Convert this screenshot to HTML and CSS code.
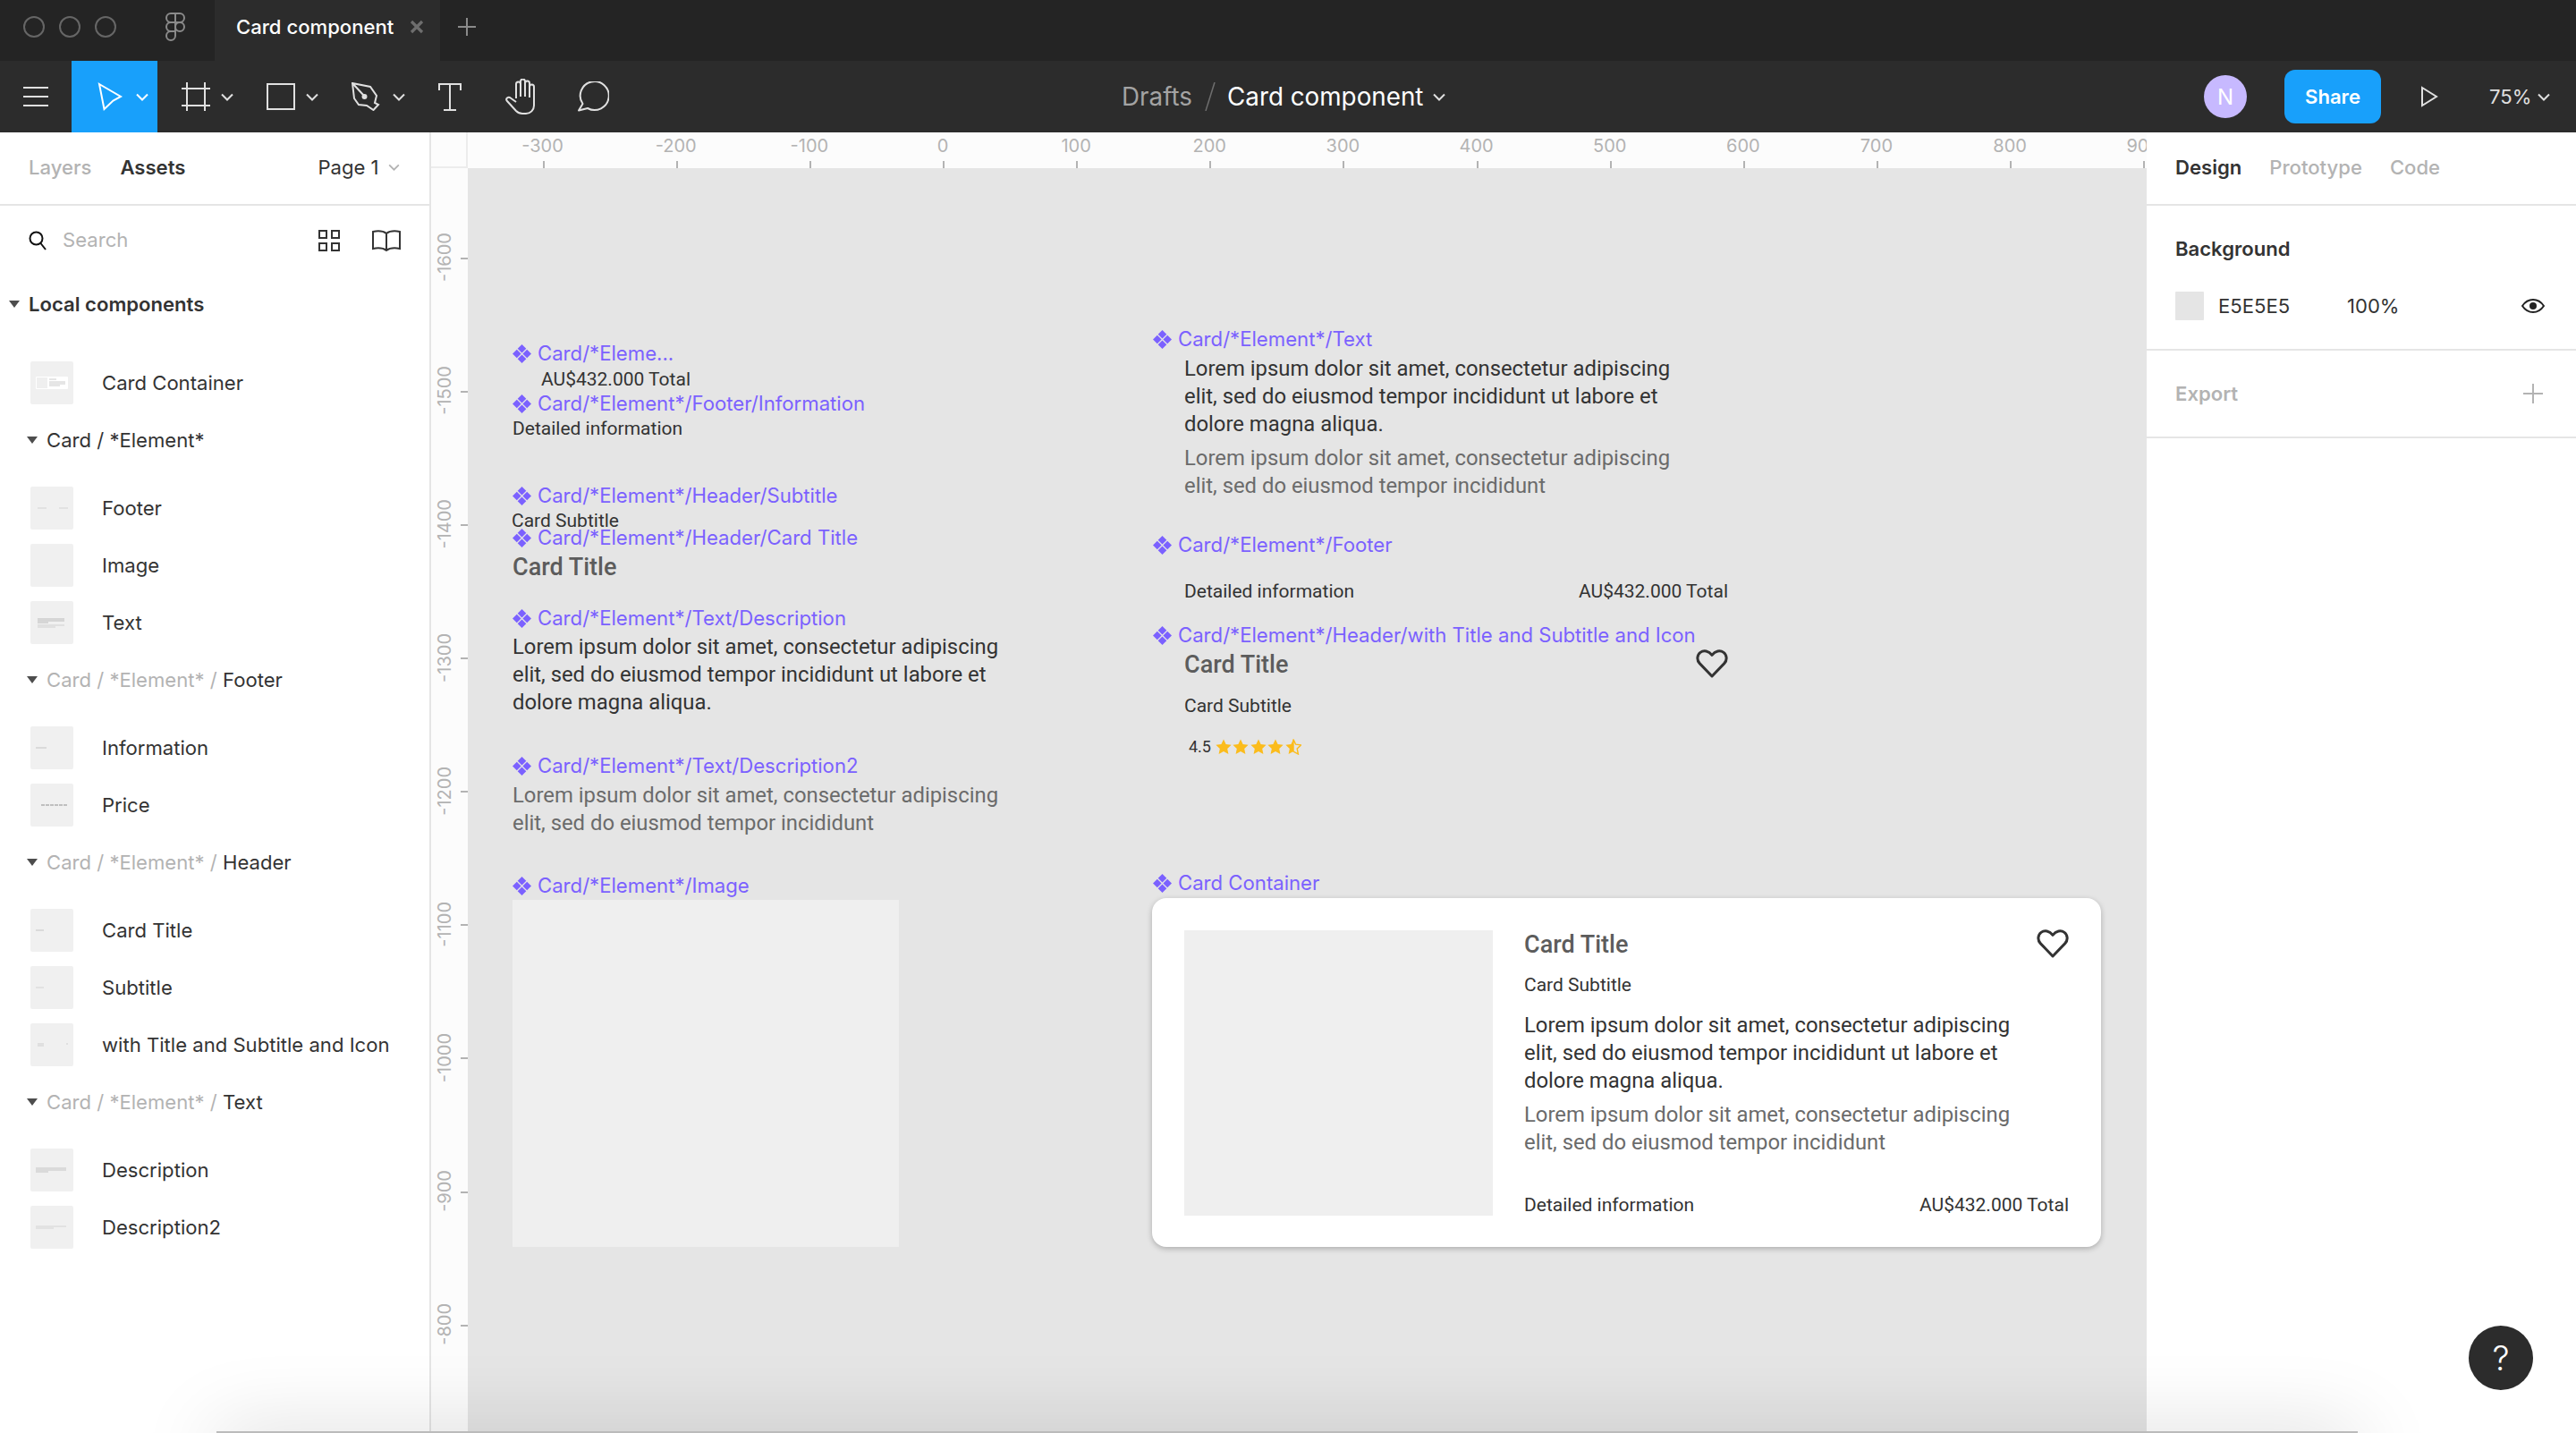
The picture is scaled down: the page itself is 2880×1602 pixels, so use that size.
FILE: index.html
```html
<!DOCTYPE html>
<html lang="en">
  <head>
    <meta charset="UTF-8" />
    <title>Card component</title>
    <link rel="stylesheet" href="styles.css">
  </head>

  <body>
    <!-- svg symbols used more than once -->
    <svg class="defs" width="0" height="0">
      <symbol id="chev" viewBox="0 0 14 9"><path d="M1 1.500l6 6 6-6" fill="none" stroke="currentColor" stroke-width="2"/></symbol>
      <symbol id="comp" viewBox="0 0 21 21">
        <path d="M10.500 0l4.800 4.800-4.800 4.800-4.800-4.800zM4.800 5.700l4.800 4.800-4.800 4.800L0 10.500zM16.200 5.700l4.800 4.800-4.800 4.800-4.800-4.800zM10.500 11.400l4.800 4.800-4.800 4.800-4.800-4.800z" fill="#7b61ff"/>
      </symbol>
      <symbol id="heart" viewBox="0 0 36 32"><path d="M18 30L4.200 15.600C.6 11.800 1.400 6 5 3.400c3.800-2.800 9.400-1.800 13 3 3.600-4.800 9.200-5.800 13-3 3.600 2.600 4.400 8.400.8 12.200z" fill="none" stroke="#333" stroke-width="3" stroke-linejoin="round"/></symbol>
      <symbol id="star" viewBox="0 0 18 18"><path d="M9 .5l2.600 5.600 6 .7-4.400 4.200 1.200 6L9 14l-5.400 3 1.200-6L.4 6.800l6-.7z" fill="#fbbc1c"/></symbol>
      <symbol id="tri" viewBox="0 0 12 8"><path d="M0 0h12L6 8z" fill="#4d4d4d"/></symbol>
    </svg>

    <header class="tabbar">
      <div class="dots"><i></i><i></i><i></i></div>
      <svg class="logo" viewBox="0 0 22 32" width="22" height="32" fill="none" stroke="#8a8a8a" stroke-width="2">
        <path d="M11 1H6a5 5 0 000 10h5zM11 1h5a5 5 0 010 10h-5zM11 11H6a5 5 0 000 10h5zM11 21H6a5 5 0 105 5z"/>
        <circle cx="16" cy="16" r="5"/>
      </svg>
      <div class="tab">
        <span>Card component</span>
        <svg viewBox="0 0 16 16" width="16" height="16"><path d="M2 2l12 12M14 2L2 14" stroke="#6e6e6e" stroke-width="3.200"/></svg>
      </div>
      <svg class="newtab" viewBox="0 0 20 20" width="20" height="20"><path d="M10 0v20M0 10h20" stroke="#8a8a8a" stroke-width="2"/></svg>
    </header>

    <nav class="toolbar">
      <div class="tools">
        <button class="tool tool-menu">
          <svg viewBox="0 0 28 22" width="28" height="22"><path d="M0 1h28M0 11h28M0 21h28" stroke="#e0e0e0" stroke-width="2"/></svg>
        </button>
        <button class="tool tool-move">
          <svg viewBox="0 0 28 32" width="28" height="32"><path d="M2 2l24 14-8.500 4.500L7.500 30z" fill="none" stroke="#fff" stroke-width="2" stroke-linejoin="miter"/></svg>
          <svg class="chev" width="14" height="9"><use href="#chev"/></svg>
        </button>
        <button class="tool tool-drop">
          <svg viewBox="0 0 32 32" width="32" height="32"><path d="M6 0v32M26 0v32M0 7h32M0 26h32" stroke="#e0e0e0" stroke-width="2"/></svg>
          <svg class="chev" width="14" height="9"><use href="#chev"/></svg>
        </button>
        <button class="tool tool-drop">
          <svg viewBox="0 0 32 32" width="32" height="32"><rect x="1" y="2" width="30" height="28" fill="none" stroke="#e0e0e0" stroke-width="2"/></svg>
          <svg class="chev" width="14" height="9"><use href="#chev"/></svg>
        </button>
        <button class="tool tool-drop tool-pen">
          <svg viewBox="0 0 32 32" width="32" height="32" fill="none" stroke="#e0e0e0" stroke-width="2"><path d="M1 1l20 4 7 10-2 8 4 2-5.500 6-7.500-5-9-1-5-7zM1 1l13 14"/><circle cx="14.500" cy="16" r="2" fill="#e0e0e0"/></svg>
          <svg class="chev" width="14" height="9"><use href="#chev"/></svg>
        </button>
        <button class="tool tool-type">
          <svg viewBox="0 0 26 32" width="26" height="32" fill="none" stroke="#e0e0e0" stroke-width="2"><path d="M1 9V2h24v7M13 2v29M6 31h14"/></svg>
        </button>
        <button class="tool tool-hand">
          <svg viewBox="0 0 36 40" width="36" height="40" fill="none" stroke="#e0e0e0" stroke-width="2" stroke-linejoin="round"><path d="M12 22V6a2.500 2.500 0 015 0M17 20V3a2.500 2.500 0 015 0v17M22 20V5a2.500 2.500 0 015 0v15M27 21V9a2.500 2.500 0 015 0v21c0 5-4 9-9 9h-4c-3 0-5-1-7-3L2 25c-2-2 0-5 3-4l7 5"/></svg>
        </button>
        <button class="tool tool-comment">
          <svg viewBox="0 0 36 34" width="36" height="34" fill="none" stroke="#e0e0e0" stroke-width="2"><path d="M2 32.500l4.500-7.500A16 16 0 1 1 12 30z" stroke-linejoin="round"/></svg>
        </button>
      </div>
      <div class="crumbs">
        <span class="crumb-dim">Drafts</span>
        <svg viewBox="0 0 14 32" width="14" height="32"><path d="M12 0L2 32" stroke="#6e6e6e" stroke-width="1.500"/></svg>
        <span class="crumb-name">Card component</span>
        <svg class="chev" width="14" height="9"><use href="#chev"/></svg>
      </div>
      <div class="actions">
        <div class="avatar">N</div>
        <button class="share">Share</button>
        <svg class="play" viewBox="0 0 20 24" width="20" height="24"><path d="M2 2l16 10L2 22z" fill="none" stroke="#e0e0e0" stroke-width="2"/></svg>
        <span class="zoom">75%</span>
        <svg class="chev" width="14" height="9"><use href="#chev"/></svg>
      </div>
    </nav>

    <main class="workspace">
      <aside class="sidebar">
        <div class="panel-tabs">
          <span class="tab-off">Layers</span>
          <span class="tab-on">Assets</span>
          <span class="page">Page 1</span>
          <svg class="chev" width="13" height="8"><use href="#chev"/></svg>
        </div>
        <div class="search">
          <svg class="search-ic" viewBox="0 0 20 22" width="20" height="22" fill="none" stroke="#111" stroke-width="2"><circle cx="8.500" cy="8.500" r="7"/><path d="M13.500 14l5.500 7"/></svg>
          <span class="search-txt">Search</span>
          <svg class="grid-ic" viewBox="0 0 24 24" width="24" height="24" fill="none" stroke="#333" stroke-width="2"><rect x="1" y="1" width="8" height="8"/><rect x="15" y="1" width="8" height="8"/><rect x="1" y="15" width="8" height="8"/><rect x="15" y="15" width="8" height="8"/></svg>
          <svg class="book-ic" viewBox="0 0 34 24" width="34" height="24" fill="none" stroke="#333" stroke-width="2"><path d="M17 4C13 1 7 1 2 2v19c5-1 11-1 15 2 4-3 10-3 15-2V2c-5-1-11-1-15 2zM17 4v19"/></svg>
        </div>

        <div class="local-head">
          <svg class="tri" width="12" height="8"><use href="#tri"/></svg>
          <span>Local components</span>
        </div>
        <ul class="assets assets-first">
          <li>
            <svg class="thumb" viewBox="0 0 48 48"><rect x="6" y="17" width="36" height="14" rx="1" fill="#fff"/><rect x="7" y="18" width="12" height="12" fill="#efefef"/><path d="M21 20h8M21 23h18M21 25h18M21 27h12" stroke="#ccc"/></svg>
            <span>Card Container</span>
          </li>
        </ul>

        <div class="group">
          <svg class="tri" width="12" height="8"><use href="#tri"/></svg>
          <span>Card / *Element*</span>
        </div>
        <ul class="assets">
          <li>
            <svg class="thumb" viewBox="0 0 48 48"><path d="M8 24h10M32 24h10" stroke="#d4d4d4"/></svg>
            <span>Footer</span>
          </li>
          <li><svg class="thumb" viewBox="0 0 48 48"></svg><span>Image</span></li>
          <li>
            <svg class="thumb" viewBox="0 0 48 48"><path d="M8 20h30M8 22h30M8 24h12" stroke="#bbb"/><path d="M8 27h30M8 29h20" stroke="#d0d0d0"/></svg>
            <span>Text</span>
          </li>
        </ul>

        <div class="group">
          <svg class="tri" width="12" height="8"><use href="#tri"/></svg>
          <span><em>Card / *Element* /</em> Footer</span>
        </div>
        <ul class="assets">
          <li>
            <svg class="thumb" viewBox="0 0 48 48"><path d="M6 24h12" stroke="#c4c4c4"/></svg>
            <span>Information</span>
          </li>
          <li>
            <svg class="thumb" viewBox="0 0 48 48"><path d="M12 24h30" stroke="#8f8f8f" stroke-dasharray="4 1"/></svg>
            <span>Price</span>
          </li>
        </ul>

        <div class="group">
          <svg class="tri" width="12" height="8"><use href="#tri"/></svg>
          <span><em>Card / *Element* /</em> Header</span>
        </div>
        <ul class="assets">
          <li>
            <svg class="thumb" viewBox="0 0 48 48"><path d="M6 24h9" stroke="#c4c4c4"/></svg>
            <span>Card Title</span>
          </li>
          <li>
            <svg class="thumb" viewBox="0 0 48 48"><path d="M6 24h9" stroke="#d4d4d4"/></svg>
            <span>Subtitle</span>
          </li>
          <li>
            <svg class="thumb" viewBox="0 0 48 48"><path d="M8 23h7M8 25h7M40 23h2" stroke="#cfcfcf"/></svg>
            <span>with Title and Subtitle and Icon</span>
          </li>
        </ul>

        <div class="group">
          <svg class="tri" width="12" height="8"><use href="#tri"/></svg>
          <span><em>Card / *Element* /</em> Text</span>
        </div>
        <ul class="assets">
          <li>
            <svg class="thumb" viewBox="0 0 48 48"><path d="M6 22h34M6 24h34M6 26h14" stroke="#c4c4c4"/></svg>
            <span>Description</span>
          </li>
          <li>
            <svg class="thumb" viewBox="0 0 48 48"><path d="M6 23h34M6 25h20" stroke="#d4d4d4"/></svg>
            <span>Description2</span>
          </li>
        </ul>
      </aside>

      <section class="stage">
        <div class="hrule">
          <div class="corner"></div>
          <div class="hticks">
            <span>-300</span><span>-200</span><span>-100</span><span>0</span><span>100</span><span>200</span><span>300</span><span>400</span><span>500</span><span>600</span><span>700</span><span>800</span><span>900</span>
          </div>
        </div>
        <div class="stage-body">
          <div class="vrule">
            <span><b>-1600</b></span><span><b>-1500</b></span><span><b>-1400</b></span><span><b>-1300</b></span><span><b>-1200</b></span><span><b>-1100</b></span><span><b>-1000</b></span><span><b>-900</b></span><span><b>-800</b></span>
          </div>

          <div class="canvas">
            <!-- left column -->
            <div class="label l-price"><svg width="21" height="21"><use href="#comp"/></svg>Card/*Eleme...</div>
            <div class="small n-price">AU$432.000 Total</div>
            <div class="label l-info"><svg width="21" height="21"><use href="#comp"/></svg>Card/*Element*/Footer/Information</div>
            <div class="small n-info">Detailed information</div>
            <div class="label l-sub"><svg width="21" height="21"><use href="#comp"/></svg>Card/*Element*/Header/Subtitle</div>
            <div class="small n-sub">Card Subtitle</div>
            <div class="label l-title"><svg width="21" height="21"><use href="#comp"/></svg>Card/*Element*/Header/Card Title</div>
            <div class="title n-title">Card Title</div>
            <div class="label l-desc"><svg width="21" height="21"><use href="#comp"/></svg>Card/*Element*/Text/Description</div>
            <p class="lorem n-desc">Lorem ipsum dolor sit amet, consectetur adipiscing<br />elit, sed do eiusmod tempor incididunt ut labore et<br />dolore magna aliqua.</p>
            <div class="label l-desc2"><svg width="21" height="21"><use href="#comp"/></svg>Card/*Element*/Text/Description2</div>
            <p class="lorem2 n-desc2">Lorem ipsum dolor sit amet, consectetur adipiscing<br />elit, sed do eiusmod tempor incididunt</p>
            <div class="label l-image"><svg width="21" height="21"><use href="#comp"/></svg>Card/*Element*/Image</div>
            <div class="image n-image"></div>

            <!-- right column -->
            <div class="label l-text"><svg width="21" height="21"><use href="#comp"/></svg>Card/*Element*/Text</div>
            <div class="n-text">
              <p class="lorem">Lorem ipsum dolor sit amet, consectetur adipiscing<br />elit, sed do eiusmod tempor incididunt ut labore et<br />dolore magna aliqua.</p>
              <p class="lorem2">Lorem ipsum dolor sit amet, consectetur adipiscing<br />elit, sed do eiusmod tempor incididunt</p>
            </div>
            <div class="label l-footer"><svg width="21" height="21"><use href="#comp"/></svg>Card/*Element*/Footer</div>
            <div class="foot n-footer"><span>Detailed information</span><span>AU$432.000 Total</span></div>
            <div class="label l-header"><svg width="21" height="21"><use href="#comp"/></svg>Card/*Element*/Header/with Title and Subtitle and Icon</div>
            <div class="head n-header">
              <div>
                <div class="title">Card Title</div>
                <div class="small sub">Card Subtitle</div>
                <div class="rating">
                  <span>4.5</span>
                  <svg width="18" height="18"><use href="#star"/></svg>
                  <svg width="18" height="18"><use href="#star"/></svg>
                  <svg width="18" height="18"><use href="#star"/></svg>
                  <svg width="18" height="18"><use href="#star"/></svg>
                  <svg width="18" height="18" viewBox="0 0 18 18"><path d="M9 .5v13.500L3.600 17l1.200-6L.4 6.800l6-.7z" fill="#fbbc1c"/><path d="M9 .5l2.600 5.600 6 .7-4.400 4.200 1.200 6L9 14z" fill="none" stroke="#fbbc1c" stroke-width="1.400"/></svg>
                </div>
              </div>
              <svg class="heart" width="36" height="32"><use href="#heart"/></svg>
            </div>

            <div class="label l-card"><svg width="21" height="21"><use href="#comp"/></svg>Card Container</div>
            <article class="card">
              <div class="image card-img"></div>
              <div class="card-body">
                <div>
                  <div class="head">
                    <div>
                      <div class="title">Card Title</div>
                      <div class="small sub card-sub">Card Subtitle</div>
                    </div>
                    <svg class="heart" width="36" height="32"><use href="#heart"/></svg>
                  </div>
                  <p class="lorem card-lorem">Lorem ipsum dolor sit amet, consectetur adipiscing<br />elit, sed do eiusmod tempor incididunt ut labore et<br />dolore magna aliqua.</p>
                  <p class="lorem2">Lorem ipsum dolor sit amet, consectetur adipiscing<br />elit, sed do eiusmod tempor incididunt</p>
                </div>
                <div class="foot"><span>Detailed information</span><span>AU$432.000 Total</span></div>
              </div>
            </article>
          </div>
        </div>
      </section>

      <aside class="props">
        <div class="panel-tabs props-tabs">
          <span class="tab-on">Design</span>
          <span class="tab-off">Prototype</span>
          <span class="tab-off">Code</span>
        </div>
        <div class="bg-section">
          <h4>Background</h4>
          <div class="fill">
            <i class="swatch"></i>
            <span class="hex">E5E5E5</span>
            <span class="pct">100%</span>
            <svg class="eye" viewBox="0 0 26 16" width="26" height="16"><path d="M1 8c3-4.500 7-7 12-7s9 2.500 12 7c-3 4.500-7 7-12 7S4 12.500 1 8z" fill="none" stroke="#222" stroke-width="2"/><circle cx="13" cy="8" r="4" fill="#222"/></svg>
          </div>
        </div>
        <div class="export">
          <span>Export</span>
          <svg viewBox="0 0 22 22" width="22" height="22"><path d="M11 0v22M0 11h22" stroke="#b3b3b3" stroke-width="2"/></svg>
        </div>
      </aside>
    </main>

    <button class="help">?</button>
    <div class="edge"></div>
  </body>
</html>
```

FILE: styles.css
```css
* {
  box-sizing: border-box;
}
html,
body {
  margin: 0;
  width: 2880px;
  height: 1602px;
  overflow: hidden;
}
body {
  position: relative;
  font-family: Inter, "Liberation Sans", sans-serif;
  font-size: 22.1px;
  color: #333;
  background: #fff;
}
button {
  border: 0;
  padding: 0;
  background: none;
  font: inherit;
  color: inherit;
}
.defs {
  position: absolute;
}

/* top tabs */
.tabbar {
  height: 68px;
  padding-bottom: 8px;
  background: #242424;
  display: flex;
  align-items: center;
}
.dots {
  display: flex;
  gap: 16px;
  padding-left: 26px;
  width: 185px;
}
.dots i {
  width: 24px;
  height: 24px;
  border: 2px solid #666;
  border-radius: 50%;
}
.logo {
  margin-right: 33px;
}
.tab {
  width: 252px;
  height: 68px;
  margin-bottom: -8px;
  padding-bottom: 8px;
  background: #2c2c2c;
  display: flex;
  align-items: center;
  padding-left: 24px;
  gap: 18px;
  color: #fff;
  font-weight: 500;
}
.newtab {
  margin-left: 20px;
}

/* toolbar */
.toolbar {
  height: 80px;
  background: #2c2c2c;
  display: flex;
  align-items: center;
  color: #e0e0e0;
}
.tools {
  display: flex;
  height: 80px;
  width: 1254px;
}
.tool {
  height: 80px;
  display: flex;
  align-items: center;
}
.tool-menu {
  width: 80px;
  padding-left: 26px;
}
.tool-move {
  width: 96px;
  background: #18a0fb;
  padding-left: 29px;
  gap: 15px;
  color: #fff;
}
.tool-drop {
  width: 95px;
  padding-left: 27px;
  gap: 12px;
}
.tool-pen {
  padding-left: 27px;
  gap: 14px;
}
.tool-type {
  width: 75px;
  padding-left: 29px;
}
.tool-hand {
  width: 80px;
  padding-left: 29px;
}
.tool-comment {
  padding-left: 29px;
}
.crumbs {
  display: flex;
  align-items: center;
  font-size: 27.8px;
  width: 880px;
}
.crumb-dim {
  color: #a3a3a3;
  margin-right: 13px;
}
.crumb-name {
  color: #fff;
  margin-left: 12px;
  margin-right: 11px;
}
.actions {
  display: flex;
  align-items: center;
  padding-left: 330px;
}
.avatar {
  width: 48px;
  height: 48px;
  border-radius: 50%;
  background: #c7b9ff;
  color: #fff;
  display: flex;
  align-items: center;
  justify-content: center;
  font-size: 24px;
}
.share {
  width: 108px;
  height: 60px;
  margin-left: 42px;
  border-radius: 12px;
  background: #18a0fb;
  color: #fff;
  font-weight: 600;
}
.play {
  margin-left: 44px;
}
.zoom {
  margin-left: 57px;
  margin-right: 7px;
}

/* main area */
.workspace {
  height: 1454px;
  display: flex;
}
.sidebar {
  width: 482px;
  border-right: 2px solid #e5e5e5;
  flex: none;
}
.props {
  width: 480px;
  flex: none;
}
.panel-tabs {
  height: 82px;
  border-bottom: 2px solid #e5e5e5;
  display: flex;
  align-items: center;
  padding: 0 0 2px 32px;
  color: #b3b3b3;
}
.tab-off {
  color: #b3b3b3;
  font-weight: 500;
}
.tab-on {
  color: #333;
  font-weight: 600;
  margin-left: 32px;
}
.page {
  color: #333;
  margin-left: 148px;
  margin-right: 10px;
}
.search {
  height: 78px;
  display: flex;
  align-items: center;
  padding-left: 32px;
}
.search-txt {
  color: #b3b3b3;
  margin-left: 18px;
  width: 286px;
  margin-top: -2px;
}
.book-ic {
  margin-left: 35px;
}
.local-head {
  height: 64px;
  display: flex;
  align-items: center;
  padding-left: 10px;
  gap: 10px;
  font-weight: 600;
}
.local-head span,
.group span,
.assets li span {
  margin-top: -1px;
}
.group {
  height: 64px;
  display: flex;
  align-items: center;
  padding-left: 30px;
  gap: 10px;
}
.group em {
  font-style: normal;
  color: #b3b3b3;
}
.assets {
  list-style: none;
  margin: 0;
  padding: 12px 0 0 34px;
}
.assets-first {
  padding-top: 24px;
}
.assets li {
  height: 64px;
  display: flex;
  align-items: center;
  gap: 32px;
}
.thumb {
  width: 48px;
  height: 48px;
  background: #f0f0f0;
  border-radius: 2px;
}

/* rulers */
.stage {
  width: 1918px;
  display: flex;
  flex-direction: column;
  overflow: hidden;
}
.hrule {
  height: 40px;
  display: flex;
  background: #fcfcfc;
  flex: none;
}
.corner {
  width: 41px;
  border-right: 2px solid #ececec;
  border-bottom: 2px solid #ececec;
  flex: none;
}
.hticks {
  display: flex;
  padding-left: 9px;
}
.hticks span {
  width: 149.15px;
  flex: none;
  position: relative;
  text-align: center;
  font-size: 20px;
  line-height: 30px;
  color: #b3b3b3;
}
.hticks span::after {
  content: "";
  position: absolute;
  left: 50%;
  bottom: 0;
  width: 2px;
  height: 8px;
  background: #b3b3b3;
}
.stage-body {
  flex: 1;
  display: flex;
}
.vrule {
  width: 41px;
  flex: none;
  background: #fcfcfc;
  padding-top: 25px;
  overflow: hidden;
}
.vrule span {
  display: flex;
  height: 149.15px;
  align-items: center;
  position: relative;
  padding-left: 4px;
}
.vrule b {
  writing-mode: vertical-rl;
  transform: rotate(180deg);
  font-size: 20px;
  font-weight: 400;
  line-height: 22px;
  color: #b3b3b3;
}
.vrule span::after {
  content: "";
  position: absolute;
  right: 0;
  top: 50%;
  width: 8px;
  height: 2px;
  background: #b3b3b3;
}

/* canvas */
.canvas {
  flex: 1;
  position: relative;
  background: #e5e5e5;
  overflow: hidden;
  font-family: Roboto, sans-serif;
}
.label {
  position: absolute;
  display: flex;
  align-items: center;
  gap: 7px;
  height: 24px;
  font-family: Inter, sans-serif;
  font-size: 22.15px;
  color: #7b61ff;
  white-space: nowrap;
}
.small {
  font-size: 21px;
  line-height: 24px;
  color: #333;
}
.title {
  font-size: 27px;
  line-height: 34px;
  font-weight: 500;
  color: #5c5c5c;
}
.lorem,
.lorem2 {
  margin: 0;
  font-size: 23.85px;
  line-height: 31px;
  color: #333;
  white-space: nowrap;
}
.lorem2 {
  margin-top: 7px;
  color: #6b6b6b;
}
.image {
  background: #efefef;
}
.foot {
  display: flex;
  justify-content: space-between;
  font-size: 21px;
  line-height: 24px;
  color: #333;
}
.head {
  display: flex;
  justify-content: space-between;
  align-items: flex-start;
}
.heart {
  flex: none;
}
.sub {
  margin-top: 17px;
}
.rating {
  display: flex;
  align-items: center;
  gap: 1.6px;
  margin-top: 22px;
  padding-left: 5px;
  font-size: 18px;
  line-height: 24px;
  color: #333;
}
.rating span {
  margin-right: 3px;
}

.l-price { left: 50px; top: 195px; }
.l-info { left: 50px; top: 251px; }
.l-sub { left: 50px; top: 354px; }
.l-title { left: 50px; top: 401px; }
.l-desc { left: 50px; top: 491px; }
.l-desc2 { left: 50px; top: 656px; }
.l-image { left: 50px; top: 790px; }
.l-text { left: 766px; top: 179px; }
.l-footer { left: 766px; top: 409px; }
.l-header { left: 766px; top: 510px; }
.l-card { left: 766px; top: 787px; }

.n-price { position: absolute; left: 82px; top: 224px; }
.n-info { position: absolute; left: 50px; top: 279px; }
.n-sub { position: absolute; left: 49px; top: 382px; }
.n-title { position: absolute; left: 50px; top: 429px; }
.n-desc { position: absolute; left: 50px; top: 520px; margin: 0; }
.n-desc2 { position: absolute; left: 50px; top: 686px; margin: 0; }
.n-image { position: absolute; left: 50px; top: 818px; width: 432px; height: 388px; }
.n-text { position: absolute; left: 801px; top: 209px; }
.n-footer { position: absolute; left: 801px; top: 461px; width: 608px; }
.n-header { position: absolute; left: 801px; top: 538px; width: 608px; }

.card {
  position: absolute;
  left: 765px;
  top: 816px;
  width: 1061px;
  height: 390px;
  background: #fff;
  border-radius: 16px;
  box-shadow: 0 2px 6px rgba(0, 0, 0, 0.25);
  display: flex;
  padding: 36px;
  gap: 35px;
}
.card-img {
  width: 345px;
  height: 319px;
  flex: none;
}
.card-body {
  flex: 1;
  height: 319px;
  display: flex;
  flex-direction: column;
  justify-content: space-between;
}
.card-body > div:first-child {
  margin-top: -1px;
}
.card-sub {
  margin-top: 16px;
}
.card-lorem {
  margin-top: 18px;
}

/* right panel */
.props-tabs {
  gap: 31px;
}
.props-tabs .tab-on {
  margin-left: 0;
}
.bg-section {
  height: 162px;
  border-bottom: 2px solid #e5e5e5;
  padding: 34px 32px 0;
}
.bg-section h4 {
  margin: 0;
  font-size: 22.1px;
  line-height: 28px;
  font-weight: 600;
}
.fill {
  display: flex;
  align-items: center;
  margin-top: 34px;
}
.swatch {
  width: 32px;
  height: 32px;
  background: #e5e5e5;
  border-radius: 1px;
}
.hex {
  margin-left: 16px;
  width: 144px;
}
.pct {
  width: 195px;
}
.export {
  height: 98px;
  border-bottom: 2px solid #e5e5e5;
  display: flex;
  align-items: center;
  justify-content: space-between;
  padding: 0 37px 0 32px;
  color: #b3b3b3;
  font-weight: 600;
}

/* floating bits */
.help {
  position: absolute;
  left: 2760px;
  top: 1482px;
  width: 72px;
  height: 72px;
  border-radius: 50%;
  background: #2c2c2c;
  color: #fff;
  font-size: 38px;
  font-weight: 300;
}
.edge {
  position: absolute;
  left: 242px;
  top: 1600px;
  width: 2394px;
  height: 60px;
  background: #bbb;
  box-shadow: 0 0 90px rgba(0, 0, 0, 0.15);
}
```
